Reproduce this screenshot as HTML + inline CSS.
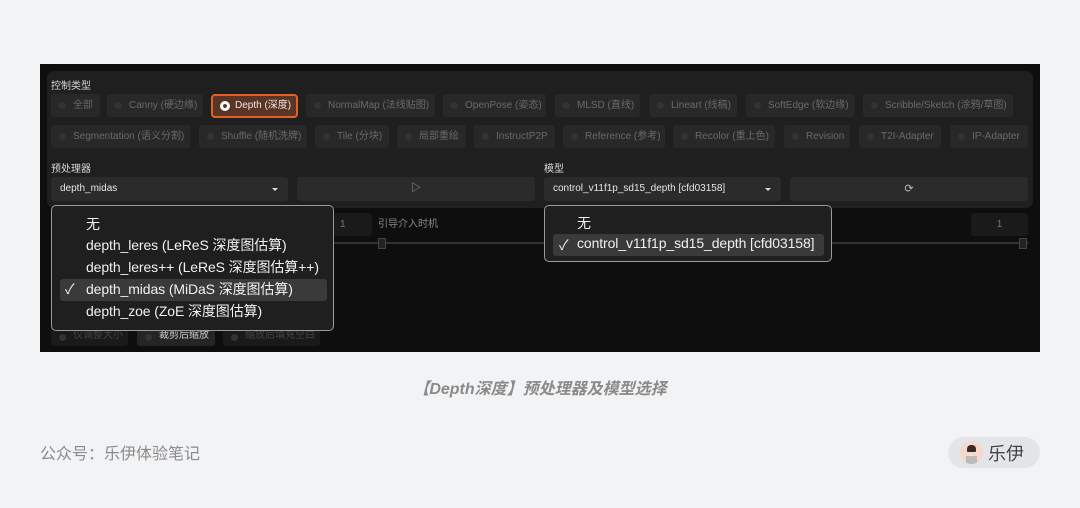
<!DOCTYPE html>
<html><head><meta charset="utf-8"><style>
*{margin:0;padding:0;box-sizing:border-box}
body{width:1080px;height:508px;background:#f2f3f5;position:relative;overflow:hidden;font-family:"Liberation Sans","Noto Sans CJK SC",sans-serif}
.a{position:absolute}
.shot{left:40px;top:64px;width:1000px;height:288px;background:#0e0e0e;overflow:hidden}
.panel{left:7px;top:7px;width:986px;height:137px;background:#1f1f1f;border-radius:7px}
.lbl{color:#d8d8d8;font-size:10px;white-space:nowrap}
.b{height:23px;background:#282828;border-radius:3px;color:#6a6a6a;font-size:10px;line-height:23px;padding-left:22px;white-space:nowrap;overflow:hidden}
.b:before{content:"";position:absolute;left:8px;top:8px;width:7px;height:7px;border-radius:50%;background:#333}
.sel{background:#2b2b2b;border-radius:3px;height:24px;color:#e6e6e6;font-size:10px;line-height:24px;padding-left:9px}
.dd{background:#1f1f1f;border:1px solid #9a9a9a;border-radius:5px;color:#f0f0f0;font-size:14px;letter-spacing:-0.1px}
.it{position:absolute;white-space:nowrap}
.hl{position:absolute;background:#3a3a3a;border-radius:3px}
</style></head><body>
<div class="a shot">
 <div class="a panel"></div>
 <div class="a lbl" style="left:11px;top:13px">控制类型</div>
 <div class="a b" style="left:11px;top:30px;width:49px">全部</div>
 <div class="a b" style="left:67px;top:30px;width:96px">Canny (硬边缘)</div>
 <div class="a" style="left:171px;top:30px;width:87px;height:24px;background:#5a3526;border:2px solid #e0622a;border-radius:4px;color:#f0e6e0;font-size:10px;line-height:20px;padding-left:22px">Depth (深度)<span class="a" style="left:7px;top:5px;width:10px;height:10px;border-radius:50%;background:#fff;border:3px solid #fff;box-shadow:inset 0 0 0 2px #5a3526"></span></div>
 <div class="a b" style="left:266px;top:30px;width:129px">NormalMap (法线贴图)</div>
 <div class="a b" style="left:403px;top:30px;width:103px">OpenPose (姿态)</div>
 <div class="a b" style="left:515px;top:30px;width:85px">MLSD (直线)</div>
 <div class="a b" style="left:609px;top:30px;width:88px">Lineart (线稿)</div>
 <div class="a b" style="left:706px;top:30px;width:109px">SoftEdge (软边缘)</div>
 <div class="a b" style="left:823px;top:30px;width:150px">Scribble/Sketch (涂鸦/草图)</div>
 <div class="a b" style="left:11px;top:61px;width:139px">Segmentation (语义分割)</div>
 <div class="a b" style="left:159px;top:61px;width:108px">Shuffle (随机洗牌)</div>
 <div class="a b" style="left:275px;top:61px;width:74px">Tile (分块)</div>
 <div class="a b" style="left:357px;top:61px;width:69px">局部重绘</div>
 <div class="a b" style="left:434px;top:61px;width:81px">InstructP2P</div>
 <div class="a b" style="left:523px;top:61px;width:102px">Reference (参考)</div>
 <div class="a b" style="left:633px;top:61px;width:102px">Recolor (重上色)</div>
 <div class="a b" style="left:744px;top:61px;width:66px">Revision</div>
 <div class="a b" style="left:819px;top:61px;width:82px">T2I-Adapter</div>
 <div class="a b" style="left:910px;top:61px;width:78px">IP-Adapter</div>
 <div class="a lbl" style="left:11px;top:96px">预处理器</div>
 <div class="a lbl" style="left:504px;top:96px">模型</div>
 <div class="a sel" style="left:11px;top:113px;width:237px">depth_midas<span class="a" style="right:10px;top:11px;border:3px solid transparent;border-top:3px solid #ddd"></span></div>
 <div class="a sel" style="left:257px;top:113px;width:238px;text-align:center;padding:0;color:#aaa">▷</div>
 <div class="a sel" style="left:504px;top:113px;width:237px">control_v11f1p_sd15_depth [cfd03158]<span class="a" style="right:10px;top:11px;border:3px solid transparent;border-top:3px solid #ddd"></span></div>
 <div class="a sel" style="left:750px;top:113px;width:238px;text-align:center;padding:0;color:#bbb;font-size:11px">⟳</div>
 <div class="a" style="left:293px;top:149px;width:39px;height:23px;background:#1a1a1a;border-radius:3px;color:#777;font-size:10px;line-height:23px;padding-left:7px">1</div>
 <div class="a lbl" style="left:338px;top:151px;color:#888">引导介入时机</div>
 <div class="a" style="left:931px;top:149px;width:57px;height:23px;background:#1a1a1a;border-radius:3px;color:#777;font-size:10px;line-height:23px;text-align:center">1</div>
 <div class="a" style="left:290px;top:178px;width:698px;height:2px;background:#333"></div>
 <div class="a" style="left:338px;top:174px;width:8px;height:11px;background:#222;border:1px solid #444"></div>
 <div class="a" style="left:979px;top:174px;width:8px;height:11px;background:#222;border:1px solid #444"></div>
 <div class="a b" style="left:11px;top:262px;width:77px;height:20px;line-height:20px;background:#1a1a1a;color:#444">仅调整大小</div>
 <div class="a b" style="left:97px;top:262px;width:78px;height:20px;line-height:20px;color:#ccc;background:#252525">裁剪后缩放</div>
 <div class="a b" style="left:183px;top:262px;width:97px;height:20px;line-height:20px;background:#1a1a1a;color:#444">缩放后填充空白</div>
 <div class="a dd" style="left:11px;top:141px;width:283px;height:126px">
  <div class="hl" style="left:8px;top:73px;width:267px;height:22px"></div>
  <div class="it" style="left:34px;top:8px">无</div>
  <div class="it" style="left:34px;top:29px">depth_leres (LeReS 深度图估算)</div>
  <div class="it" style="left:34px;top:51px">depth_leres++ (LeReS 深度图估算++)</div>
  <div class="it" style="left:13px;top:73px">✓</div>
  <div class="it" style="left:34px;top:73px">depth_midas (MiDaS 深度图估算)</div>
  <div class="it" style="left:34px;top:95px">depth_zoe (ZoE 深度图估算)</div>
 </div>
 <div class="a dd" style="left:504px;top:141px;width:288px;height:57px">
  <div class="hl" style="left:8px;top:28px;width:271px;height:22px"></div>
  <div class="it" style="left:32px;top:7px">无</div>
  <div class="it" style="left:14px;top:29px">✓</div>
  <div class="it" style="left:32px;top:29px">control_v11f1p_sd15_depth [cfd03158]</div>
 </div>
</div>
<div class="a" style="left:0;top:375px;width:1080px;text-align:center;color:#8a8a8a;font-size:16px;font-weight:bold;font-style:italic">【Depth深度】预处理器及模型选择</div>
<div class="a" style="left:40px;top:440px;color:#8a8a8a;font-size:16px">公众号：乐伊体验笔记</div>
<div class="a" style="left:948px;top:437px;width:92px;height:31px;background:#e4e5e9;border-radius:16px">
 <div class="a" style="left:12px;top:4px;width:23px;height:23px;border-radius:50%;background:#f6d8cc;overflow:hidden"><div class="a" style="left:7px;top:4px;width:9px;height:7px;background:#3a2a24;border-radius:4px 4px 1px 1px"></div><div class="a" style="left:6px;top:15px;width:11px;height:10px;background:#bbb"></div></div>
 <div class="a" style="left:40px;top:3px;color:#444;font-size:18px">乐伊</div>
</div>
</body></html>
